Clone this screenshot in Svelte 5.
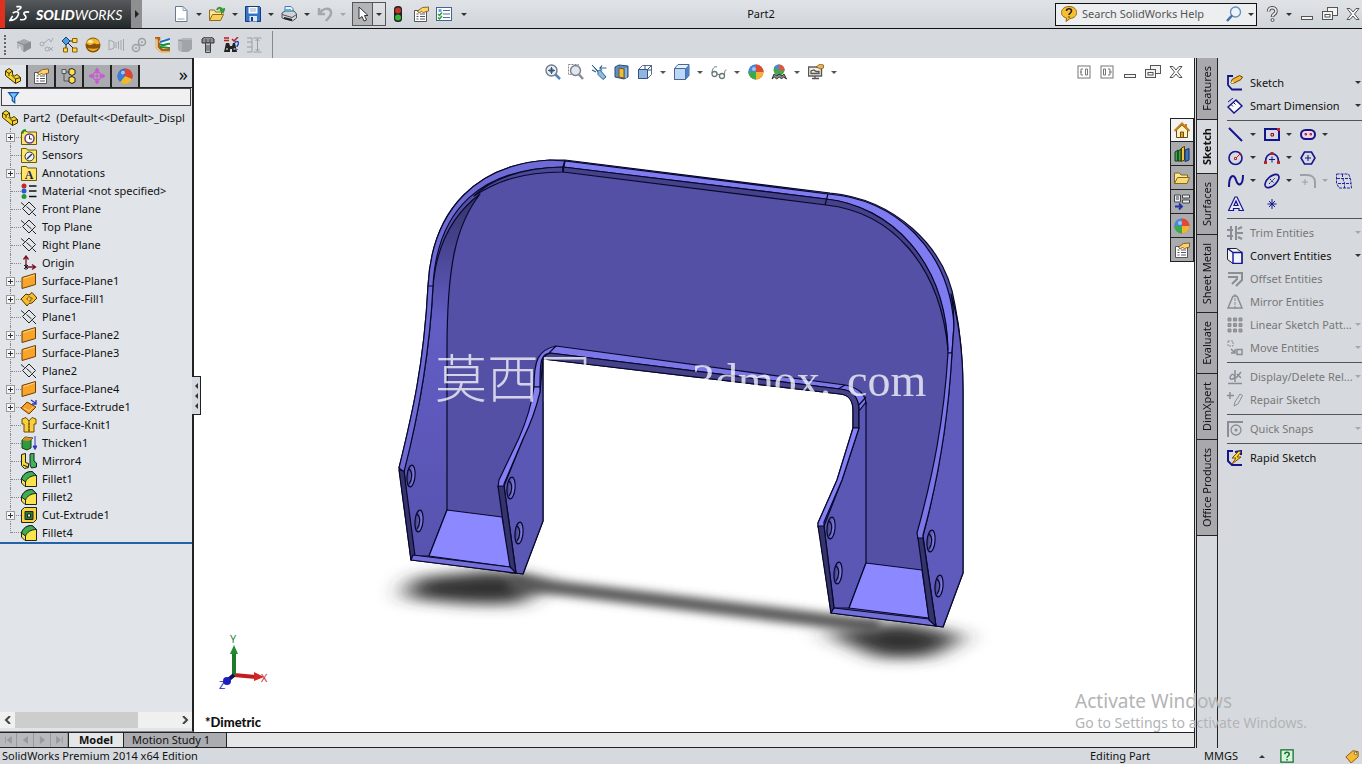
<script>
	const icons = {
		newDoc: `<path d="M2.500 .5h7.500l4 4v11h-11.500z" fill="#fff" stroke="#66798f"/><path d="M10 .5v4h4M4.500 13h7" fill="none" stroke="#8fa3bb"/>`,
		open: `<path d="M.5 14V4h5l1 2h6v3" fill="#fbe6a0" stroke="#8e6c16"/><path d="M.5 14.500l3-6h11l-3 6z" fill="#f7cf5b" stroke="#8e6c16"/><path d="M8 4c1-3 4-3 5.500 0M11 3.500l3 2.500 1.500-4" fill="none" stroke="#2f9a2f" stroke-width="2"/>`,
		save: `<path d="M.5 .5h14l1 1v14H.5z" fill="#3574c7" stroke="#123a7c"/><path d="M3.500 1h9v6.500h-9z" fill="#fff"/><path d="M5 3h6M5 5h6" stroke="#9ab"/><path d="M4.500 10h7.500v5.500H4.500z" fill="#dce7f4"/><path d="M6 11h2v4H6z" fill="#123a7c"/>`,
		print: `<path d="M4 6V.5h6l2 2V6" fill="#e6f4ff" stroke="#54779b"/><path d="M1 7l3-2h9l2.500 3v4l-4 3L1 12z" fill="#cfd3da" stroke="#4d545f"/><path d="M1 8.500l10 3 4.500-3" fill="none" stroke="#4d545f"/><path d="M4 4h6" stroke="#4fb3ea" stroke-width="2"/><path d="M3 12l8 2" stroke="#222" stroke-width="2"/>`,
		undo: `<path d="M2 2v6h6M2.500 8C5 2 13 1 14 6c.8 4-3 6-5 9" fill="none" stroke="#a3a8ae" stroke-width="2.500"/>`,
		pointer: `<path d="M4 1v12l3-2.500 2 4.500 2.500-1L9.500 9.500H13z" fill="#fff" stroke="#333"/>`,
		lights: `<rect x="4" y="0" width="8" height="16" rx="3.500" fill="#222"/><circle cx="8" cy="4.500" r="3" fill="#c3342c"/><circle cx="8" cy="11.500" r="3" fill="#35b735"/>`,
		props: `<path d="M1.500 4.500h12v11h-12z" fill="#fff" stroke="#555"/><path d="M3.500 8h2M3.500 10.500h2M3.500 13h2M7 8h5M7 10.500h5M7 13h5" stroke="#556"/><path d="M4.500 5l5-3.500 6-.5v4l-5 1.500-2-1-2.500 1.500z" fill="#ffd16a" stroke="#6e4a12" stroke-width=".8"/>`,
		options: `<rect x=".5" y="1.500" width="15" height="13" fill="#fff" stroke="#46648a"/><path d="M7 4.500h7M7 8h7M7 11.500h7" stroke="#4b6ea0"/><path d="M2.500 3h3v3h-3z" fill="#6da6e8"/><path d="M2 8l1.500 1.500L6 6.500M2 11.500L3.500 13 6 10" stroke="#289b32" fill="none" stroke-width="1.500"/>`,
		greyCube: `<path d="M1 5l7-3 7 3v6l-7 4z" fill="#a4a7ab"/><path d="M1 5l7 3v7l-3-2v-3l-2-1v3l-2-1z" fill="#b5b8bc"/><path d="M1 5l7 3 7-3M8 8v7" stroke="#858990" fill="none"/><path d="M8 8l7-3v6l-7 4z" fill="#8b8e93"/>`,
		greyNodes: `<circle cx="3" cy="7" r="2" fill="none" stroke="#a6aab0"/><circle cx="8" cy="12" r="2" fill="none" stroke="#a6aab0"/><path d="M5 6l5-4 2 3 2-4M10 10l4 4M14 10l-4 4" stroke="#a6aab0" fill="none"/>`,
		nodes: `<path d="M5 4l7 0M5 5l7 7M4 5v6" stroke="#222"/><path d="M4 0l4 4-4 4-4-4z" fill="#4f9be0" stroke="#1b4474"/><path d="M10.500 1.500h4.500v4h-4.500zM1.500 11h4v4h-4zM10.500 11h4.500v4h-4.500z" fill="#ffd84a" stroke="#8a5d00"/>`,
		sphere: `<circle cx="8" cy="8" r="7.500" fill="#8a5206"/><path d="M1 6C3 0 13 0 15 6c-3 3-5-1-7 1S3 8 1 6z" fill="#f2b52c"/><ellipse cx="5.500" cy="4.500" rx="2.500" ry="1.500" fill="#fff1bc"/><path d="M2.500 11c3 4 8 4 11 0-3 1-7 1-11 0z" fill="#f0ac26"/>`,
		greyWave: `<path d="M1 3v10M1 3l5 2v6l-5 2M8 5v6M10.500 4v8M13 3v10M15.500 2v12" stroke="#a3a7ad" fill="none"/>`,
		greyLink: `<circle cx="5" cy="11" r="3.500" fill="none" stroke="#9b9fa5" stroke-width="1.500"/><circle cx="11" cy="5" r="3.500" fill="none" stroke="#9b9fa5" stroke-width="1.500"/><circle cx="5" cy="11" r="1" fill="#9b9fa5"/><circle cx="11" cy="5" r="1" fill="#9b9fa5"/>`,
		route: `<path d="M1 1h4v9l3 3h8" stroke="#b85b12" stroke-width="2.500" fill="none"/><path d="M5 4l5-2 6 1v8l-7 1z" fill="#fff"/><path d="M6 5l10-3" stroke="#1a6fc2" stroke-width="2"/><path d="M6 7c4 3 6-1 10 0M6 10l10 1" stroke="#228a33" stroke-width="2" fill="none"/><path d="M2 1v10l4 4h10" stroke="#e8b32e" fill="none"/>`,
		greyBox: `<path d="M1 3l5-2h9v11l-4 3H4l-3-2z" fill="#b3b6ba"/><path d="M6 4h9M6 4v11M1 3l5 1" stroke="#9194a0" fill="none"/><path d="M6 4h9v8l-4 3H6z" fill="#a1a5a9"/>`,
		bolt: `<path d="M2 2l3-2h6l3 2v4H2z" fill="#8b8f94" stroke="#333"/><path d="M5.500 6h5v9.500h-5z" fill="#c1c4c8" stroke="#444"/><path d="M5.500 9h5M5.500 11h5M5.500 13h5M6 2v4M10 2v4" stroke="#444"/>`,
		binoculars: `<path d="M1 1h5M1 3.500h5" stroke="#c21d1d" stroke-width="1.500"/><path d="M9 2l2 2 4-4" stroke="#c21d1d" stroke-width="1.500" fill="none"/><path d="M3 6h3l1 3h2l1-3h2l2 9h-5v-3H7v3H1z" fill="#222"/><path d="M3 12h2M10.500 12h2" stroke="#fff"/><path d="M12 6c0-2 3.500-2 3.500 0S14 8 14 10M14 12v1" stroke="#264fc0" fill="none" stroke-width="1.500"/>`,
		greyGauge: `<path d="M1 1h5v14H1M1 5h5M1 10h5M7.500 1h8M7.500 15h8M11.500 2v12M9.500 4l2-2 2 2M9.500 12l2 2 2-2" stroke="#9a9da3" fill="none"/>`,
		part: `<path d="M.5 3L4 .5 7.500 3v3.500l2 1.500 2.500-1.500 3.500 3v3.500L10.500 15.500 .5 7.500z" fill="#f7d331" stroke="#3d3000"/><path d="M.5 3L4 5.500 7.500 3M4 5.500V8M6.500 7l4 4 5-1.500M10.500 11v4.500" fill="none" stroke="#3d3000"/>`,
		configs: `<path d="M3 1v12h5M3 4h5" stroke="#555" fill="none"/><path d="M8 1.500l3-1 3 1.500v4l-3 1.500L8 6zM8 9.500l3-1 3 1.500v4l-3 1.500L8 14z" fill="#ffe14f" stroke="#222"/><path d="M1 1.500h4v4H1z" fill="#cdd" stroke="#555"/>`,
		dimx: `<path d="M8 0v16M0 8h16M8 0L6 3h4zM8 16l-2-3h4zM0 8l3-2v4zM16 8l-3-2v4z" stroke="#c75bd0" fill="#c75bd0"/><circle cx="8" cy="8" r="4" fill="none" stroke="#c75bd0" stroke-width="1.500"/>`,
		ball: `<circle cx="8" cy="8" r="7.500" fill="#2f66c9"/><path d="M8 8V.5A7.500 7.500 0 0 1 15 11z" fill="#e34331"/><path d="M8 8l7 3a7.500 7.500 0 0 1-12 3z" fill="#f0ba2b"/><path d="M8 8L3 14A7.500 7.500 0 0 1 2.500 3z" fill="#3b7ed8"/><circle cx="6" cy="4.500" r="2" fill="#fff" opacity=".6"/>`,
		ballGreen: `<circle cx="8" cy="8" r="7.500" fill="#e2543e"/><path d="M8 8L8 .5A7.500 7.500 0 0 0 1 11z" fill="#4a87d9"/><path d="M8 8V.5a7.500 7.500 0 0 1 7.500 7.500z" fill="#de4b35"/><path d="M8 8h7.500A7.500 7.500 0 0 1 8 15.500z" fill="#efb43a"/><path d="M8 8v7.500A7.500 7.500 0 0 1 .5 8z" fill="#37ad4a"/><circle cx="6" cy="5" r="2" fill="#fff" opacity=".5"/>`,
		funnel: `<path d="M2 2h12L9.500 8v6.500L6.500 12V8z" fill="#7fc1f5" stroke="#1355a6" stroke-width="1.500"/>`,
		history: `<path d="M.5 15.500V3l3-1.500 3 1.500h9v12.500z" fill="#ffe66b" stroke="#6c5a00"/><path d="M2 4.500C1 2 3 1 5 1.500" stroke="#198a2a" fill="none" stroke-width="2"/><circle cx="8.500" cy="9.500" r="4.500" fill="#fff" stroke="#673b96" stroke-width="1.500"/><path d="M8.500 6.500v3.500h2.500" fill="none" stroke="#333"/>`,
		sensors: `<path d="M.5 15.500V1.500h5l1 1.500h9v12.500z" fill="#ffe66b" stroke="#6c5a00"/><circle cx="8.500" cy="9.500" r="4.500" fill="#e8f3ff" stroke="#333"/><path d="M6 12l5-5" stroke="#333" stroke-width="1.500"/>`,
		notes: `<path d="M.5 15.500V1.500h5l1 1.500h9v12.500z" fill="#ffe66b" stroke="#6c5a00"/><text x="8" y="13.500" font-size="12" font-weight="700" text-anchor="middle" font-family="Liberation Serif, serif" fill="#1c1c60">A</text>`,
		material: `<circle cx="3" cy="3" r="2.500" fill="#c52828"/><circle cx="3" cy="8" r="2.500" fill="#2c59c9"/><circle cx="3" cy="13.500" r="2.500" fill="#26953b"/><path d="M8 3h7.500M8 8h7.500M8 13.500h7.500" stroke="#111" stroke-width="1.500"/>`,
		plane: `<path d="M8 1l6.500 6.500L8 14 1.500 7.500zM0 1.500l3.500 3M11.500 11.500l3.500 3.500M5.500 5.500l5 4.500" fill="none" stroke="#222"/>`,
		origin: `<path d="M5 1v11h9M2.500 4.500L5 1l2.500 3.500M11 9.500l3.500 2.500-3.500 2.500" fill="none" stroke="#7a1020" stroke-width="1.300"/><path d="M3 10l4 4M7 10l-4 4M5 9v6" stroke="#222"/>`,
		surface: `<path d="M1 4.500L14.500 .5v11L1 15.500z" fill="#f7a428" stroke="#6d3d00"/><path d="M2.500 5.500l11-3.500" stroke="#ffd68a"/>`,
		fill: `<path d="M0 8l5-5 3 1 3-2.500 5 5.500-5 5-3 .5-2 2.500z" fill="#f9bd2c" stroke="#4d3500"/><path d="M5 8l3-3 4 2.500-3 3.500z" fill="#8b5e0c"/><path d="M6.500 8h4M8 6v4" stroke="#ffe07a"/>`,
		extrude: `<path d="M0 9l6-6 9 5-7 7z" fill="#f79c25" stroke="#6d3d00"/><path d="M3 9l5 3 4-4" stroke="#ffd68a" fill="none"/><path d="M10 1l5 3.500M15 1v4h-4" stroke="#2938b9" stroke-width="1.300" fill="none"/>`,
		knit: `<path d="M1 2l4-1.500L8 4l3-3.500L15 2v5h-2v8H3V7H1z" fill="#f8cf3c" stroke="#6e4a00"/><path d="M8 4v11M7 7h2M7 10h2M7 13h2" stroke="#6e4a00"/>`,
		thicken: `<path d="M1 5l3-3 8 1-2 2v8l-4 2-5-2z" fill="#2e9c3c" stroke="#0e3c16"/><path d="M1 5l3-3 8 1-2 2-4 1z" fill="#d98d2f"/><path d="M14 1v11M12 11l2 3.500L16 11z" stroke="#2938b9" fill="#2938b9"/>`,
		mirror: `<path d="M.5 1.500l4-1v9l3 1v4l-4 1-3-3z" fill="#f2da40" stroke="#222"/><path d="M9 1l4-1v8l2.500 2v4l-5 1L9 12z" fill="#45b355" stroke="#123"/><path d="M2 12l5 2" stroke="#222"/>`,
		fillet: `<path d="M.5 8C2 3 6 .5 11 .5l4.500 4v11H4L.5 12z" fill="#fbe44b" stroke="#222"/><path d="M.5 8C2 3 6 .5 11 .5l4.500 4C10 4.500 6 7 4.500 11z" fill="#3fae4f" stroke="#123"/><path d="M4.500 11v4" stroke="#222"/>`,
		cut: `<path d="M.5 3l3-2.500h12v12l-3 3H.5z" fill="#f6d63c" stroke="#222"/><path d="M4 4.500h8v8H4z" fill="#2a7c35" stroke="#222"/><path d="M6.500 7h3v3h-3z" fill="#eee" stroke="#222"/>`,
		helpBubble: `<path d="M8 .5c10 0 10 11.500 1 12L5 15.500l.500-3.500C-2.500 10-.500 .5 8 .5z" fill="#f6bf33" stroke="#9a6500"/><path d="M5.500 5c0-3 5-3 5 0 0 2-2.500 2-2.500 4M8 10.500v1" fill="none" stroke="#222" stroke-width="1.600"/>`,
		glass: `<circle cx="9.500" cy="6" r="5" fill="#eaf4ff" stroke="#6e8fb5" stroke-width="1.400"/><path d="M6 9.500L1 15" stroke="#3f6fae" stroke-width="2.500"/>`,
		question: `<path d="M4.500 5.500c0-5 7.500-5 7.500 0 0 2.500-3.500 2.500-3.500 5.500" fill="none" stroke="#555" stroke-width="3.600"/><path d="M4.500 5.500c0-5 7.500-5 7.500 0 0 2.500-3.500 2.500-3.500 5" fill="none" stroke="#eee" stroke-width="1.600"/><circle cx="8.500" cy="14" r="1.500" fill="#eee" stroke="#555"/>`,
		minimise: `<rect x="2.500" y="10.500" width="11" height="3" fill="#f4f4f4" stroke="#555"/>`,
		restore: `<rect x="5.500" y="1.500" width="10" height="8" fill="#f4f4f4" stroke="#555"/><rect x=".5" y="5.500" width="10" height="8" fill="#f4f4f4" stroke="#555"/><rect x="3" y="8.500" width="5" height="2.500" fill="#fff" stroke="#555"/>`,
		close: `<path d="M2 2.500h3l3 3.500 3-3.500h3L9.500 8l4.500 5.500h-3L8 10l-3 3.500H2L6.500 8z" fill="#f8f8f8" stroke="#555"/>`,
		paneL: `<rect x="2" y="2" width="12" height="12" fill="#fff" stroke="#777"/><path d="M7 5H5v6h2M4 8h2M9.500 5h2v6h-2z" fill="none" stroke="#777"/>`,
		paneR: `<rect x="2" y="2" width="12" height="12" fill="#fff" stroke="#777"/><path d="M9 5h2v6H9M10 8h3M4.500 5h2v6h-2z" fill="none" stroke="#777"/>`,
		zoomFit: `<circle cx="6.500" cy="6.500" r="5.500" fill="#e4edf7" stroke="#6f7d8f" stroke-width="1.400"/><path d="M6.500 3v7M3 6.500h7M5 5h3v3H5z" stroke="#44566d" fill="none"/><path d="M10.500 10.500L15 15" stroke="#5484c0" stroke-width="2.500"/>`,
		zoomArea: `<path d="M.5 .5h10v10H.5z" fill="none" stroke="#888" stroke-dasharray="2 1"/><circle cx="7.500" cy="6.500" r="5" fill="#dfe6ee" stroke="#77808b" stroke-width="1.400"/><path d="M11 10.500l4 4.500" stroke="#8d8894" stroke-width="2.500"/>`,
		prevView: `<path d="M1 1l6 6 2-1 6 7-3 2.500-5-5V8z" fill="#8cbce6" stroke="#31608f"/><path d="M15.500 4H9l2-2.500M9 4l2 2.500M1 6l4 2" stroke="#31608f" fill="none" stroke-width="1.200"/>`,
		section: `<path d="M1 3l4-2 9 1v11l-4 2-9-2z" fill="#5b8fc9" stroke="#304b71"/><path d="M5 4l5 1v9l-5-1z" fill="#ecbd45" stroke="#785715"/><path d="M12 4v10" stroke="#b7d5f5"/>`,
		viewBox: `<path d="M1.500 5.500l4-4h9v9l-4 4h-9z" fill="#fff" stroke="#556b8e"/><path d="M1.500 5.500h9v9h-9z" fill="#8fb5e2" stroke="#38547e"/><path d="M10.500 5.500l4-4M8 1.500v4M14 6h-4" stroke="#38547e"/>`,
		cube: `<path d="M.5 4.500l3.500-4h11v11l-3.500 4H.5z" fill="#e4effb" stroke="#496795"/><path d="M.5 4.500h11v11H.5z" fill="#bcd6f5" stroke="#496795"/><path d="M11.500 4.500L15 .5v11l-3.500 4z" fill="#4c7fca"/>`,
		glasses: `<circle cx="3.500" cy="10" r="2.500" fill="none" stroke="#677" stroke-width="1.300"/><circle cx="11" cy="12" r="2.500" fill="none" stroke="#677" stroke-width="1.300"/><path d="M1 9C1 4 4 2 6 3M6 10l3 1M13.500 11c0-5 1-5 2-5" stroke="#677" fill="none"/>`,
		scene: `<circle cx="8" cy="6" r="5.500" fill="#3fa84e"/><path d="M8 6V.5A5.500 5.500 0 0 1 13.500 7z" fill="#e4553f"/><path d="M8 6L3 3.500A5.500 5.500 0 0 1 8 .5z" fill="#4c87d8"/><path d="M1 15l2-5 3 2 2-2 3 2 2-2 2.500 5-3-2-2 2-2-2-3 2-2-2z" fill="#888" stroke="#333"/>`,
		monitor: `<rect x=".5" y="3" width="13" height="9" fill="#f4efe0" stroke="#555" stroke-width="1.400"/><path d="M3 9.500V7l3-1 2 1.500h3v2zM4 14.500h7M7 12v2.500" stroke="#555" fill="none" stroke-width="1.300"/><path d="M8 3l4-3 3.500 1v3l-3 1z" fill="#e9b458" stroke="#6e4a12" stroke-width=".7"/>`,
		house: `<path d="M2.500 8v7.500h11V8L8 3z" fill="#fff3c5" stroke="#6d4a11"/><path d="M.5 9L8 1.500 15.500 9M12 2v3" fill="none" stroke="#c98018" stroke-width="2"/><path d="M6.500 10h3v5.500h-3z" fill="#e89e2d" stroke="#6d4a11"/>`,
		books: `<path d="M1 6l3-2v11H1zM4 5l3-2v12H4z" fill="#3fa54b" stroke="#173c1c"/><path d="M7.500 2l3-1.500V14l-3 1.500z" fill="#f1c63f" stroke="#4e3b00"/><path d="M11 4l4-1.500V14l-4 1.500z" fill="#3d76c5" stroke="#14305c"/>`,
		folder: `<path d="M.5 13.500V3h5l1.500 2h6.500v3" fill="#fae79c" stroke="#85661a"/><path d="M.5 13.500l3-6h12l-2.500 6z" fill="#f8d974" stroke="#85661a"/>`,
		palette: `<path d="M.5 1h6v7h-6zM8.500 1h7v3h-7zM8.500 6h7v3h-7z" fill="#e8edf4" stroke="#444"/><path d="M2 3h3M2 5h3" stroke="#444"/><path d="M1 12.500h6M5 9.500l3 3-3 3" stroke="#1e2fa8" stroke-width="1.800" fill="none"/>`,
		sketch: `<path d="M6 1H1v9l4 4.500h10" fill="none" stroke="#14148c" stroke-width="1.800"/><path d="M4 8l1-3.500L12.500 .5l3 1.500-1.500 2.500L7 8z" fill="#f6b634" stroke="#6b4200"/><path d="M4 8l3 0-2-2z" fill="#fff3cf"/>`,
		smartDim: `<path d="M1 9l8-7 6 6-8 7z" fill="#fff" stroke="#14148c" stroke-width="1.500"/><path d="M4 6.500l2 2M6.500 4.500l2 2M9 2.500l2 2M1 4l5-4" stroke="#14148c"/>`,
		line: `<path d="M1 1l13 13" stroke="#14148c" stroke-width="2"/>`,
		rect: `<rect x="1" y="2" width="14" height="11" fill="none" stroke="#14148c" stroke-width="2"/><path d="M7 6.500h2.500v2.500H7z" fill="#f5d740" stroke="#805"/><path d="M13 1h3v3h-3z" fill="#c22"/>`,
		slot: `<rect x="1" y="3" width="14" height="9" rx="4.500" fill="#f3d7e2" stroke="#14148c" stroke-width="2"/><path d="M5 6.500h1.500v1.500H5zM10 6.500h1.500v1.500H10z" stroke="#a02040" fill="none"/>`,
		circle: `<circle cx="7.500" cy="8" r="6.500" fill="none" stroke="#14148c" stroke-width="1.600"/><path d="M7.500 8.500L12 4M11 4h2v2" stroke="#b22" fill="none"/><path d="M6.500 7.500h2v2h-2z" fill="#fff" stroke="#b22"/>`,
		arc: `<path d="M1.500 12C1 1 15 1 14.500 12" fill="none" stroke="#14148c" stroke-width="1.600"/><path d="M8 6.500v6M5 9.500h6" stroke="#14148c"/><path d="M0 11h3v3H0zM13 11h3v3h-3zM6.500 2h3v3h-3z" fill="#b22"/>`,
		polygon: `<path d="M4.500 2h7L15 8l-3.500 6h-7L1 8z" fill="none" stroke="#14148c" stroke-width="1.600"/><path d="M8 5v6M5 8h6" stroke="#14148c"/>`,
		spline: `<path d="M1 14C1 2 6 0 8 7s7 6 7-5" fill="none" stroke="#14148c" stroke-width="2"/>`,
		ellipse: `<ellipse cx="8" cy="8" rx="8.500" ry="4.500" transform="rotate(-42 8 8)" fill="none" stroke="#14148c" stroke-width="1.600"/><path d="M5 11l6-6M6 6l4 4" stroke="#14148c" stroke-dasharray="2 1"/>`,
		greyFillet: `<path d="M0 2h7c5 0 8 3 8 7v6" fill="none" stroke="#9da1a7" stroke-width="2"/><path d="M5 6v6M2 9h6" stroke="#9da1a7"/>`,
		planeGrid: `<path d="M.5 1h12l2 4.500 1 9.500H3L.5 10zM1 5.500h13M2 10.500h13M6.500 1v4l2 5v5" fill="none" stroke="#2626a0" stroke-dasharray="3 1"/>`,
		letterA: `<path d="M.5 14.500L7 1h2l6.500 13.500h-4.500v-2H5.500v2zM6 9.500h4L8 5z" fill="#e6e8ff" stroke="#14148c" stroke-width="1.200"/>`,
		star: `<path d="M8 3v10M3.500 8h9M5 5l6 6M11 5l-6 6" stroke="#14148c"/>`,
		trim: `<path d="M0 5h6M0 11h6M4 1v14M9 1v14M9 8h7M11 4l4-2M11 12l4 2" stroke="#8a8e94" stroke-width="2"/>`,
		convert: `<path d="M.5 .5h9l5.500 4v11H6l-5.500-4z" fill="#f0f4fb" stroke="#222"/><path d="M.5 .5L6 4.500M6 4.500h9v11H6z" stroke="#14149c" stroke-width="1.400" fill="none"/>`,
		offset: `<path d="M1 2h14v7l-6 6M1 6h9v2l-5 5" fill="none" stroke="#8a8e94" stroke-width="2"/>`,
		mirrorEnt: `<path d="M6 2L1 14h5M10 2l5 12h-5M1 14h14M6 2h4" fill="none" stroke="#8a8e94" stroke-width="1.500"/><path d="M8 0v16" stroke="#8a8e94" stroke-dasharray="3 1"/>`,
		pattern: `<path d="M1 1h3v3H1zM6.500 1h3v3h-3zM12 1h3v3h-3zM1 6.500h3v3H1zM6.500 6.500h3v3h-3zM12 6.500h3v3h-3zM1 12h3v3H1zM6.500 12h3v3h-3zM12 12h3v3h-3z" fill="#999" stroke="#8a8e94"/>`,
		move: `<path d="M1 1h5v5H1z" fill="none" stroke="#8a8e94" stroke-dasharray="2 1"/><path d="M4 9l4 4M8 9v4H4" stroke="#8a8e94" stroke-width="1.500" fill="none"/><path d="M10 9.500h5v5h-5z" fill="none" stroke="#8a8e94" stroke-width="1.500"/>`,
		relations: `<path d="M1 14.500h14M8 13V1M3 8c2-4 4-3 5 0-2 3-5 3-5 0M9 9l5-6M10 5l4 4" stroke="#8a8e94" stroke-width="1.500" fill="none"/>`,
		repair: `<path d="M3 0v7M0 3.500h7" stroke="#8a8e94" stroke-width="1.500"/><path d="M7 14l1-4 5-8 2.500 1.500L11 12z" fill="none" stroke="#8a8e94"/>`,
		snaps: `<path d="M1 16V1h15" fill="none" stroke="#8a8e94" stroke-width="2"/><circle cx="9" cy="9" r="5" fill="none" stroke="#8a8e94" stroke-width="1.300"/><circle cx="9" cy="9" r="1.500" fill="#8a8e94"/>`,
		rapid: `<path d="M6 1H1v10l4 4h10M8 2l6-1v4" fill="none" stroke="#14148c" stroke-width="2"/><path d="M12 1L5 8h4l-4 6 9-7h-4l4-5z" fill="#ffd92e" stroke="#7a4d00"/>`,
		helpBox: `<rect x="1" y="1" width="14" height="14" fill="#d9f2dd" stroke="#12752c" stroke-width="1.500"/><path d="M5.500 6c0-3 5-3 5 0 0 2-2.500 2-2.500 4M8 11.500v1.500" fill="none" stroke="#12752c" stroke-width="1.800"/>`,
		tag: `<path d="M1 9l8-7 6 1v6l-8 7z" fill="#f8b932" stroke="#7a5200"/><circle cx="12" cy="5" r="1.500" fill="#fff" stroke="#7a5200"/>`
	};

	const fileTools = ['newDoc', 'open', 'save', 'print', 'undo'];
	const quickTools = ['greyCube', 'greyNodes', 'nodes', 'sphere', 'greyWave', 'greyLink', 'route', 'greyBox', 'bolt', 'binoculars', 'greyGauge'];
	const panelTabs = ['part', 'props', 'configs', 'dimx', 'ball'];
	const viewTools = [['zoomFit', 0], ['zoomArea', 0], ['prevView', 0], ['section', 0], ['viewBox', 1], ['cube', 1], ['glasses', 1], ['ballGreen', 0], ['scene', 1], ['monitor', 1]];
	const taskTabs = ['house', 'books', 'folder', 'palette', 'ballGreen', 'props'];
	const commandTabs = ['Features', 'Sketch', 'Surfaces', 'Sheet Metal', 'Evaluate', 'DimXpert', 'Office Products'];

	const tree = [
		['History', 'history', 1], ['Sensors', 'sensors', 0], ['Annotations', 'notes', 1],
		['Material <not specified>', 'material', 0],
		['Front Plane', 'plane', 0], ['Top Plane', 'plane', 0], ['Right Plane', 'plane', 0],
		['Origin', 'origin', 0],
		['Surface-Plane1', 'surface', 1], ['Surface-Fill1', 'fill', 1], ['Plane1', 'plane', 0],
		['Surface-Plane2', 'surface', 1], ['Surface-Plane3', 'surface', 1], ['Plane2', 'plane', 0],
		['Surface-Plane4', 'surface', 1], ['Surface-Extrude1', 'extrude', 1], ['Surface-Knit1', 'knit', 0],
		['Thicken1', 'thicken', 0], ['Mirror4', 'mirror', 0],
		['Fillet1', 'fillet', 0], ['Fillet2', 'fillet', 0], ['Cut-Extrude1', 'cut', 1], ['Fillet4', 'fillet', 0]
	];

	// icon, has a drop-down, disabled
	const drawTools = [
		[['line', 1], ['rect', 1], ['slot', 1]],
		[['circle', 1], ['arc', 1], ['polygon', 0]],
		[['spline', 1], ['ellipse', 1], ['greyFillet', 1, 1], ['planeGrid', 0]],
		[['letterA', 0], ['star', 0]]
	];

	const topCommands = [['Sketch', 'sketch', 1, 0], ['Smart Dimension', 'smartDim', 1, 0]];
	const commandGroups = [
		[
			['Trim Entities', 'trim', 1, 1], ['Convert Entities', 'convert', 1, 0], ['Offset Entities', 'offset', 0, 1],
			['Mirror Entities', 'mirrorEnt', 0, 1], ['Linear Sketch Patt...', 'pattern', 1, 1], ['Move Entities', 'move', 1, 1]
		],
		[['Display/Delete Rel...', 'relations', 1, 1], ['Repair Sketch', 'repair', 0, 1]],
		[['Quick Snaps', 'snaps', 1, 1]],
		[['Rapid Sketch', 'rapid', 0, 0]]
	];

	const holes = [[411, 476], [419, 521], [511, 488], [519, 533], [831, 528], [838, 573], [931, 541], [939, 586]];

	let activeTab = 'Sketch';
	let query = '';
	let filter = '';
</script>

{#snippet icon(name)}
	<svg class="icon" viewBox="0 0 16 16" aria-hidden="true">{@html icons[name]}</svg>
{/snippet}

{#snippet command([label, name, drop, off])}
	<button class="command" disabled={!!off}>
		{@render icon(name)}
		<span>{label}</span>
		{#if drop}<i class="caret"></i>{/if}
	</button>
{/snippet}

<div class="app">
	<header class="titlebar">
		<div class="logo">
			<svg viewBox="0 0 24 20" aria-hidden="true">
				<path d="M8 2h4c2 0 1 3-3 4M4 9c6-3 8-1 5 4-2 3-5 4-8 4l3-5M22 8c-5-1-7 1-5 3 3 3 1 6-5 5" fill="none" stroke="#fff" stroke-width="1.800"/>
			</svg>
			<span><b>SOLID</b>WORKS</span>
		</div>
		<button class="flyout" aria-label="Menu"></button>
		<div class="file-tools">
			{#each fileTools as name, i}
				<button class="tool" aria-label={name}>{@render icon(name)}</button>
				<i class="caret" class:dim={i === 4}></i>
			{/each}
			<div class="select-tool">
				<button aria-label="Select">{@render icon('pointer')}</button>
				<button aria-label="Select options"><i class="caret"></i></button>
			</div>
			<button class="tool wide" aria-label="Rebuild">{@render icon('lights')}</button>
			<button class="tool wide" aria-label="File properties">{@render icon('props')}</button>
			<button class="tool wide" aria-label="Options">{@render icon('options')}</button>
			<i class="caret"></i>
		</div>
		<div class="title">Part2</div>
		<div class="search">
			{@render icon('helpBubble')}
			<input type="text" aria-label="Search" placeholder="Search SolidWorks Help" bind:value={query} />
			{@render icon('glass')}
			<i class="caret"></i>
		</div>
		<div class="window-tools">
			<button class="tool" aria-label="Help">{@render icon('question')}</button>
			<i class="caret"></i>
			<button class="tool" aria-label="Minimise">{@render icon('minimise')}</button>
			<button class="tool" aria-label="Restore">{@render icon('restore')}</button>
			<button class="tool" aria-label="Close">{@render icon('close')}</button>
		</div>
	</header>

	<div class="toolbar">
		{#each quickTools as name}
			<button class="tool" aria-label={name}>{@render icon(name)}</button>
		{/each}
	</div>

	<div class="main">
		<div class="document">
			<div class="workspace">
				<aside class="manager">
					<div class="panel-tabs">
						{#each panelTabs as name, i}
							<button class:active={i === 0} aria-label={name}>{@render icon(name)}</button>
						{/each}
						<span class="more">»</span>
					</div>
					<div class="filter">
						{@render icon('funnel')}
						<input type="text" aria-label="Filter" bind:value={filter} />
					</div>
					<div class="root">{@render icon('part')}<span>Part2&nbsp; (Default&lt;&lt;Default&gt;_Displ</span></div>
					<ul class="tree">
						{#each tree as [label, name, branch]}
							<li>
								<span class="twig">{#if branch}<button class="expand" aria-label="Expand {label}"></button>{/if}</span>
								{@render icon(name)}
								<span>{label}</span>
							</li>
						{/each}
					</ul>
					<div class="scrollbar">
						<button aria-label="Scroll left"><svg viewBox="0 0 8 8"><path d="M6 0L2 4l4 4"/></svg></button>
						<div class="track"><div class="thumb"></div></div>
						<button aria-label="Scroll right"><svg viewBox="0 0 8 8"><path d="M2 0l4 4-4 4"/></svg></button>
					</div>
					<button class="splitter" aria-label="Collapse panel"><i></i><i></i><i></i></button>
				</aside>

				<section class="viewport">
					<svg class="model" viewBox="194 58 1000 674">
						<defs>
							<filter id="soft" x="-30%" y="-100%" width="160%" height="300%"><feGaussianBlur stdDeviation="14 7"/></filter>
							<filter id="softer" x="-30%" y="-100%" width="160%" height="300%"><feGaussianBlur stdDeviation="5"/></filter>
							<linearGradient id="side" x1="0" x2="0" y1="0" y2="1">
								<stop offset="0" stop-color="#35336c"/>
								<stop offset=".35" stop-color="#625dc4"/>
								<stop offset="1" stop-color="#5753af"/>
							</linearGradient>
							<linearGradient id="hole"><stop offset="0" stop-color="#3d3a7c"/><stop offset="1" stop-color="#8c88f5"/></linearGradient>
						</defs>

						<!-- floor shadow -->
						<path d="M415 578L500 570 545 582 520 604 470 604 405 598z" fill="#333" filter="url(#soft)"/>
						<path d="M825 633L900 622 965 636 930 657 880 658z" fill="#333" filter="url(#soft)"/>
						<path d="M510 582L880 627" stroke="#555" stroke-width="14" filter="url(#softer)"/>

						<g class="part">
							<!-- silhouette, filled as the back panel -->
							<path fill="#5450a6" d="M399 468C412 415 424 365 428 286C432 208 478 164 550 160L565 160 830 193C893 199 946 245 955 305C961 335 963 360 963 390L963 573 943 627 831 613 818 523 837 480 853 428V411C853 400 849 395 840 394L543 359V521L523 574 411 560z"/>

							<!-- left outer flange -->
							<path fill="url(#side)" d="M404 470C416 425 429 365 433 286C437 240 456 212 480 194C456 225 447 265 447 350V510L429 556 413 556z"/>
							<path fill="#6f6bd4" d="M399 468C412 415 424 365 428 286C432 208 478 164 550 160L565 161 563 167C480 168 437 210 433 286C429 365 416 425 404 472z"/>
							<path fill="#4b4898" d="M563 167C520 168 490 180 474 196C496 182 520 172 563 172z"/>
							<path fill="#35336b" d="M399 470L404 471 415 556 411 560z"/>

							<!-- top rim -->
							<path fill="#7f7bf0" d="M565 161L828 194C896 199 949 250 954 325L952 353L948 353C946 260 890 206 826 199L563 167z"/>
							<path fill="#45428a" d="M563 167L826 199C890 206 946 260 948 350C940 263 890 212 826 205L563 172z"/>
							<path d="M565 161L563 172M828 194L825 205M428 286H433"/>

							<!-- opening rim -->
							<path fill="#7b77e6" d="M534 387C534 360 538 350 556 346L845 385C860 388 866 395 866 405L859 411C859 398 852 390 840 389L550 353C541 354 540 360 540 387z"/>
							<path fill="#45428a" d="M543 359C545 355 547 354 550 353L840 389C853 390 859 398 859 411V428H853V411C853 400 849 395 840 394z"/>
							<path d="M556 346L549 353M845 385L838 389M866 397L859 405"/>

							<!-- left inner flange -->
							<path fill="#5b57b5" d="M504 486L523 439 540 392 543 359V521L523 574 516 573z"/>
							<path fill="#8581f5" d="M499 480L519 438C526 422 532 402 534 387H540V392C537 405 530 425 523 439L504 484V487H498z"/>
							<path fill="#35336b" d="M498 486H504L516 573H510z"/>
							<path fill="#8c88ff" d="M447 510L502 517 510 567 429 556z"/>
							<path fill="#736fd8" d="M413 555L510 567 516 573 411 560z"/>

							<!-- right inner flange -->
							<path fill="#5b57b5" d="M824 526L842 480 859 428V411L866 402V563L849 608 834 608z"/>
							<path fill="#8581f5" d="M818 523L837 480 853 428H859L842 480 824 522V527H818z"/>
							<path fill="#35336b" d="M818 526H824L834 608 831 613z"/>
							<path fill="#8c88ff" d="M866 563L922 570 929 618 849 608z"/>
							<path fill="#736fd8" d="M834 608L929 619 936 626 831 613z"/>

							<!-- right outer flange -->
							<path fill="#5f5bbd" d="M923 536C938 480 948 425 952 353L954 325C954 310 953 304 951 294C960 325 963 360 963 390V573L943 627 936 626z"/>
							<path fill="#7b77e6" d="M917 533C933 475 944 420 948 353H952C948 425 938 480 923 535V539H918z"/>
							<path fill="#35336b" d="M918 538H923L936 626 929 620z"/>

							{#each holes as [x, y]}
								<ellipse cx={x} cy={y} rx="4" ry="11" transform="rotate(5 {x} {y})" fill="url(#hole)"/>
								<path d="M{x - 2} {y - 7}C{x + 2} {y - 4} {x + 1} {y + 4} {x - 2} {y + 8}"/>
							{/each}
						</g>

						<g class="mark">
							<text x="435" y="398" class="cjk">莫西网</text>
							<text x="594" y="396" class="www">www.</text>
							<text x="692" y="396">3dmox.</text>
							<text x="847" y="396">com</text>
						</g>
					</svg>

					<div class="view-tools">
						{#each viewTools as [name, drop]}
							<button class="tool" aria-label={name}>{@render icon(name)}</button>
							{#if drop}<i class="caret"></i>{/if}
						{/each}
					</div>
					<div class="doc-tools">
						{#each ['paneL', 'paneR', 'minimise', 'restore', 'close'] as name}
							<button class="tool" aria-label={name}>{@render icon(name)}</button>
						{/each}
					</div>
					<div class="task-tabs">
						{#each taskTabs as name, i}
							<button class:first={i === 0} aria-label={name}>{@render icon(name)}</button>
						{/each}
					</div>
					<div class="orientation">
						<svg viewBox="0 0 56 60" width="56" height="60">
							<path d="M16 43l22 2" stroke="#c41c1c" stroke-width="4"/><path d="M36 40l10 5-10 4z" fill="#d22626"/>
							<path d="M16 43V20" stroke="#1d7a2a" stroke-width="4"/><path d="M12 22l4-9 4 9z" fill="#1f8a30"/>
							<path d="M16 43l-6 5" stroke="#111150" stroke-width="4"/><circle cx="9" cy="49" r="4" fill="#1c1cc0"/>
							<text x="12" y="11" fill="#1d7a2a">Y</text><text x="43" y="50" fill="#c41c1c">X</text><text x="1" y="57" fill="#1c1cc0">Z</text>
						</svg>
						<span>*Dimetric</span>
					</div>
				</section>
			</div>

			<nav class="sheet-tabs">
				{#each ['M3 2v8M10 2L5 6l5 4z', 'M9 2L4 6l5 4z', 'M4 2l5 4-5 4z', 'M3 2l5 4-5 4zM10 2v8'] as d}
					<button class="step" disabled aria-label="Scroll tabs"><svg viewBox="0 0 12 12"><path {d}/></svg></button>
				{/each}
				<button class="sheet active">Model</button>
				<button class="sheet">Motion Study 1</button>
			</nav>
		</div>

		<nav class="command-tabs">
			{#each commandTabs as tab}
				<button class:active={tab === activeTab} on:click={() => (activeTab = tab)}><span>{tab}</span></button>
			{/each}
		</nav>

		<aside class="commands">
			{#each topCommands as item}{@render command(item)}{/each}
			<hr />
			{#each drawTools as row}
				<div class="draw-row">
					{#each row as [name, drop, off]}
						<div class="draw-tool">
							<button class="tool" disabled={!!off} aria-label={name}>{@render icon(name)}</button>
							{#if drop}<i class="caret" class:dim={off}></i>{/if}
						</div>
					{/each}
				</div>
			{/each}
			{#each commandGroups as group}
				<hr />
				{#each group as item}{@render command(item)}{/each}
			{/each}
		</aside>
	</div>

	<footer class="status">
		<span class="edition">SolidWorks Premium 2014 x64 Edition</span>
		<span class="mode">Editing Part</span>
		<span class="units">MMGS</span>
		<i class="caret up"></i>
		{@render icon('helpBox')}
		{@render icon('tag')}
	</footer>

	<div class="activate">
		<strong>Activate Windows</strong>
		<span>Go to Settings to activate Windows.</span>
	</div>
</div>

<style>
	:global(body) {
		margin: 0;
		background: #d6dade;
	}

	.app {
		position: relative;
		display: flex;
		flex-direction: column;
		min-height: 100vh;
		font: 11px/18px 'Noto Sans', 'Open Sans', sans-serif;
		color: #111;
		background: #d6dade;
		overflow: hidden;
	}

	button {
		display: flex;
		align-items: center;
		justify-content: center;
		margin: 0;
		padding: 0;
		border: 0;
		background: none;
		font: inherit;
		color: inherit;
	}

	input {
		flex: 1;
		min-width: 0;
		padding: 0;
		border: 0;
		outline: 0;
		background: none;
		font: inherit;
	}

	input::placeholder {
		color: #555;
		opacity: 1;
	}

	.icon {
		flex: none;
		width: 16px;
		height: 16px;
	}

	.tool {
		flex: none;
		width: 18px;
		height: 18px;
	}

	.caret {
		flex: none;
		width: 0;
		margin: 0 6px;
		border: 3px solid transparent;
		border-top-color: #333;
		border-bottom: 0;
	}

	.caret.dim {
		border-top-color: #a4a8ad;
	}

	.caret.up {
		border-top: 0;
		border-bottom: 3px solid #333;
	}

	/* title bar */
	.titlebar {
		display: flex;
		align-items: center;
		height: 28px;
		border-bottom: 1px solid #111;
		background: linear-gradient(#e0e3e6, #d0d5da);
	}

	.logo {
		display: flex;
		align-items: center;
		gap: 5px;
		box-sizing: border-box;
		width: 131px;
		height: 28px;
		padding-left: 4px;
		border-left: 5px solid #e0301e;
		background: linear-gradient(#565a5c, #23282a);
		color: #fff;
		font: italic 14px 'Lato', sans-serif;
	}

	.logo svg {
		width: 22px;
		height: 22px;
	}

	.logo b {
		font-weight: 900;
	}

	.flyout {
		width: 11px;
		height: 28px;
		background: #8d8f91;
	}

	.flyout::after {
		content: '';
		border: 4px solid transparent;
		border-left-color: #222;
		border-right: 0;
	}

	.file-tools {
		display: flex;
		align-items: center;
		padding-left: 30px;
	}

	.select-tool {
		display: flex;
		height: 22px;
		border: 1px solid #555;
	}

	.select-tool button:first-child {
		width: 20px;
		border-right: 1px solid #555;
		background: #b2b4b7;
	}

	.select-tool .caret {
		margin: 0 3px;
	}

	.tool.wide {
		width: 23px;
	}

	.title {
		flex: 1;
		padding-right: 6px;
		text-align: center;
	}

	.search {
		display: flex;
		align-items: center;
		gap: 5px;
		box-sizing: border-box;
		width: 202px;
		height: 23px;
		padding-left: 5px;
		border: 1px solid #111;
		background: #eceef0;
	}

	.search .caret {
		margin: 0 2px 0 1px;
	}

	.window-tools {
		display: flex;
		align-items: center;
		padding-left: 6px;
	}

	.window-tools .tool {
		margin-right: 5px;
	}

	.window-tools .tool:last-child {
		margin-right: 0;
	}

	.window-tools .caret {
		margin: 0 6px 0 0;
	}

	.toolbar {
		display: flex;
		align-items: center;
		align-self: flex-start;
		gap: 5px;
		height: 27px;
		margin-top: 2px;
		padding: 0 9px 0 15px;
		border-right: 1px solid #85898d;
	}

	.toolbar::before {
		content: '';
		position: absolute;
		left: 4px;
		height: 20px;
		border-left: 2px dotted #666;
	}

	/* work area */
	.main {
		display: flex;
		flex: 1;
	}

	.document {
		display: flex;
		flex-direction: column;
		flex: 1;
		min-width: 0;
		border-right: 1px solid #222;
	}

	.workspace {
		display: flex;
		flex: 1;
	}

	.manager {
		position: relative;
		display: flex;
		flex-direction: column;
		box-sizing: border-box;
		width: 194px;
		padding-top: 6px;
		border-right: 2px solid #222;
		border-bottom: 1px solid #888;
		background: #e1e5ea;
	}

	.manager::before {
		content: '';
		position: absolute;
		inset: 0 0 auto;
		height: 6px;
		border-top: 1px solid #555;
		background: #d6dade;
	}

	.panel-tabs {
		display: flex;
		height: 22px;
		border-top: 1px solid #222;
		border-bottom: 1px solid #222;
		background: #d6dade;
	}

	.panel-tabs button {
		width: 28px;
		box-sizing: border-box;
		border-right: 2px solid #222;
		background: #a9abae;
	}

	.panel-tabs button.active {
		background: #e1e5ea;
	}

	.more {
		margin: 0 4px 0 auto;
		font-size: 18px;
	}

	.filter {
		display: flex;
		align-items: center;
		height: 16px;
		margin: 0 1px;
		padding-left: 5px;
		border: 1px solid #444;
		background: #f0f0f3;
	}

	.filter .icon {
		width: 13px;
		height: 13px;
	}

	.root {
		display: flex;
		align-items: center;
		gap: 5px;
		height: 20px;
		padding: 2px 0 0 2px;
		overflow: hidden;
		white-space: nowrap;
	}

	.root span {
		min-width: 0;
	}

	.tree {
		margin: 0 0 auto;
		padding: 0 0 0 10px;
		list-style: none;
		border-bottom: 2px solid #2462a8;
	}

	.tree li {
		display: flex;
		align-items: center;
		height: 18px;
		white-space: nowrap;
	}

	.tree .icon {
		margin-right: 5px;
	}

	.twig {
		position: relative;
		display: flex;
		align-items: center;
		width: 10px;
		height: 18px;
		border-left: 1px dotted #888;
	}

	.twig::before {
		content: '';
		flex: 1;
		border-top: 1px dotted #888;
	}

	.tree li:last-child .twig {
		height: 9px;
		align-items: flex-end;
		align-self: flex-start;
	}

	/* the plus box lies over the dotted line */
	.expand {
		position: absolute;
		left: -5px;
		width: 9px;
		height: 9px;
		border: 1px solid #999;
		box-sizing: border-box;
		background: linear-gradient(#333, #333) center / 5px 1px no-repeat, linear-gradient(#333, #333) center / 1px 5px no-repeat, #f4f6f8;
	}

	.scrollbar {
		display: flex;
		height: 16px;
		margin-bottom: 3px;
		background: #f0f0f0;
	}

	.scrollbar button {
		width: 15px;
	}

	.scrollbar svg {
		width: 8px;
		height: 8px;
		fill: none;
		stroke: #444;
		stroke-width: 2;
	}

	.track {
		flex: 1;
	}

	.thumb {
		width: 76%;
		height: 100%;
		background: #cdcdcd;
	}

	.splitter {
		position: absolute;
		top: 318px;
		right: -9px;
		z-index: 1;
		flex-direction: column;
		gap: 4px;
		width: 9px;
		height: 39px;
		border: 1px solid #222;
		border-left: 0;
		box-sizing: border-box;
		background: #d6dade;
	}

	.splitter i {
		border: 3px solid transparent;
		border-right-color: #333;
		border-left: 0;
	}

	.viewport {
		position: relative;
		flex: 1;
		min-width: 0;
		min-height: 500px;
		background: #fff;
	}

	.model {
		position: absolute;
		inset: 0;
		width: 100%;
		height: 100%;
	}

	.part path,
	.part ellipse {
		stroke: #08082c;
		stroke-width: 1.2;
		stroke-linejoin: round;
	}

	.part path:not([fill]) {
		fill: none;
	}

	.mark {
		fill: #fff;
		opacity: 0.75;
		font: 46px 'Liberation Serif', serif;
	}

	.mark .cjk {
		font: 300 52px 'Noto Sans CJK SC', sans-serif;
	}

	.mark .www {
		font-size: 38px;
	}

	.view-tools,
	.doc-tools {
		position: absolute;
		top: 5px;
		display: flex;
		align-items: center;
		gap: 5px;
	}

	.view-tools {
		left: 50%;
		padding-right: 5px;
		transform: translateX(-50%);
	}

	.view-tools .caret {
		margin: 0 2px 0 1px;
		border-top-color: #555;
	}

	.doc-tools {
		right: 9px;
	}

	.task-tabs {
		position: absolute;
		top: 60px;
		right: 0;
	}

	.task-tabs button {
		width: 24px;
		height: 24px;
		box-sizing: border-box;
		border: 1px solid #222;
		border-top: 0;
		background: #a9abae;
	}

	.task-tabs button.first {
		border-top: 1px solid #222;
		background: #f2f3f5;
	}

	.orientation {
		position: absolute;
		left: 11px;
		bottom: 0;
		display: flex;
		flex-direction: column;
		gap: 20px;
		font: 900 13px/20px 'Lato', sans-serif;
	}

	.orientation svg {
		margin-left: 13px;
		font: 11px 'Open Sans', sans-serif;
	}

	.sheet-tabs {
		display: flex;
		height: 14px;
		border-top: 1px solid #222;
		border-bottom: 1px solid #222;
		background: #e4e6e8;
	}

	.step {
		width: 17px;
		border-right: 1px solid #999;
		box-sizing: border-box;
		background: #b7b9bc;
	}

	.step svg {
		width: 10px;
		height: 10px;
		fill: #97999c;
		stroke: #97999c;
	}

	.sheet {
		padding: 0 10px;
		border-right: 1px solid #222;
		background: #aaacaf;
		line-height: 12px;
	}

	.sheet + .sheet {
		padding: 0 16px 0 8px;
	}

	.sheet.active {
		border-left: 1px solid #222;
		background: #e4e6e8;
		font-weight: 700;
	}

	.command-tabs {
		display: flex;
		flex-direction: column;
		width: 20px;
		margin-left: 1px;
		border-left: 1px solid #222;
		border-right: 1px solid #222;
	}

	.command-tabs button {
		padding: 8px 0;
		border-bottom: 1px solid #222;
		background: #a9a9ad;
	}

	.command-tabs button.active {
		background: #d6dade;
		font-weight: 700;
	}

	.command-tabs span {
		writing-mode: vertical-rl;
		transform: rotate(180deg);
	}

	.commands {
		box-sizing: border-box;
		width: 144px;
		padding: 13px 0 0 9px;
	}

	.command {
		justify-content: flex-start;
		width: 100%;
		height: 23px;
		white-space: nowrap;
	}

	.command .icon {
		margin-right: 7px;
	}

	.command:disabled {
		color: #777;
	}

	.command .caret {
		margin: 0 1px 0 auto;
	}

	.command:disabled .caret {
		border-top-color: #a4a8ad;
	}

	.commands hr {
		margin: 3px 0 2px;
		border: 0;
		border-top: 1px solid #555;
	}

	.draw-row {
		display: flex;
		height: 23px;
	}

	.draw-tool {
		display: flex;
		flex: none;
		align-items: center;
		width: 36px;
	}

	.draw-tool .caret {
		margin: 0 5px;
	}

	.status {
		display: flex;
		align-items: center;
		height: 16px;
		padding: 0 3px 0 2px;
		line-height: 16px;
	}

	.edition {
		flex: 1;
	}

	.mode {
		width: 114px;
	}

	.units {
		width: 49px;
	}

	.status .icon {
		width: 14px;
		height: 14px;
		margin-left: 9px;
	}

	.status .icon:last-child {
		margin-left: 51px;
	}

	.activate {
		position: absolute;
		right: 55px;
		bottom: 31px;
		display: flex;
		flex-direction: column;
		color: #b2b4b6;
		font-size: 14px;
		line-height: 20px;
		pointer-events: none;
	}

	.activate strong {
		font-size: 19px;
		font-weight: 400;
		line-height: 24px;
	}
</style>
